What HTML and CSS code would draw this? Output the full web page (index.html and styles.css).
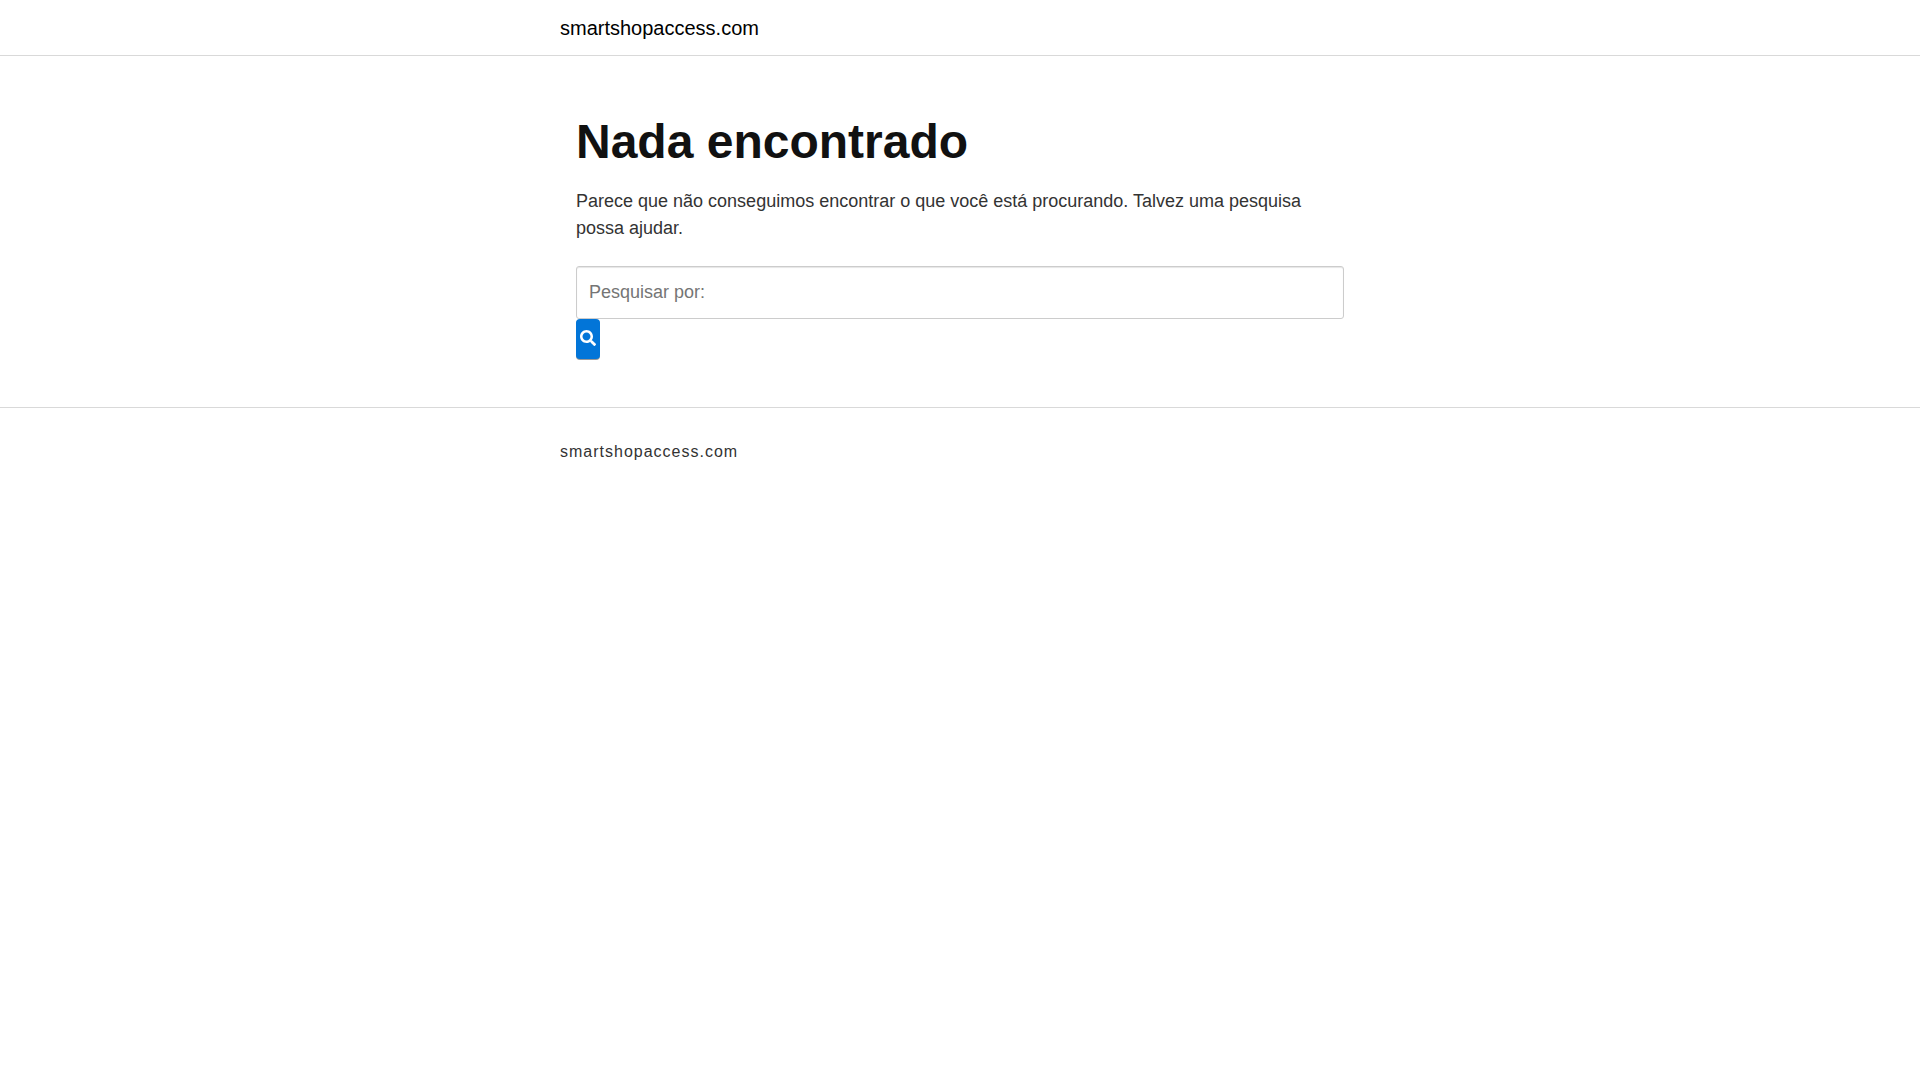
FILE: index.html
```html
<!DOCTYPE html>
<html lang="pt-BR">
<head>
    <meta charset="UTF-8">
    <meta name="viewport" content="width=device-width, initial-scale=1.0">
    <title>Nada encontrado - smartshopaccess.com</title>
    <link rel="stylesheet" href="styles.css">
</head>
<body>
    <header class="site-header">
        <div class="container">
            <a class="site-brand" href="#">smartshopaccess.com</a>
        </div>
    </header>

    <main class="content">
        <h1>Nada encontrado</h1>
        <p>Parece que não conseguimos encontrar o que você está procurando. Talvez uma pesquisa possa ajudar.</p>
        <form class="search-form" role="search">
            <input class="search-field" type="search" placeholder="Pesquisar por:" aria-label="Pesquisar por:">
            <button class="search-submit" type="submit" aria-label="Pesquisar">
                <svg viewBox="0 0 512 512" width="16" height="16" aria-hidden="true">
                    <path fill="currentColor" d="M505 442.700L405.300 343c-4.500-4.500-10.600-7-17-7H372c27.600-35.300 44-79.700 44-128C416 93.100 322.900 0 208 0S0 93.100 0 208s93.100 208 208 208c48.300 0 92.700-16.400 128-44v16.300c0 6.400 2.500 12.500 7 17l99.700 99.700c9.400 9.400 24.600 9.400 33.900 0l28.300-28.300c9.400-9.400 9.400-24.600.1-34zM208 336c-70.700 0-128-57.200-128-128 0-70.700 57.200-128 128-128 70.700 0 128 57.200 128 128 0 70.700-57.200 128-128 128z"/>
                </svg>
            </button>
        </form>
    </main>

    <footer class="site-footer">
        <div class="container">
            <p class="copyright">smartshopaccess.com</p>
        </div>
    </footer>
</body>
</html>
```
FILE: styles.css
```css
* {
    margin: 0;
    padding: 0;
    box-sizing: border-box;
}

body {
    background: #fff;
    color: #333;
    font-family: "Liberation Sans", Arial, sans-serif;
    font-size: 18px;
    line-height: 27px;
}

.container {
    max-width: 800px;
    margin: 0 auto;
}

/* Header */
.site-header {
    padding: 13px 0 12px;
    border-bottom: 1px solid #d9d9d9;
}

.site-brand {
    display: block;
    color: #000;
    font-size: 20px;
    line-height: 30px;
    text-decoration: none;
}

/* Content */
.content {
    max-width: 800px;
    margin: 0 auto;
    padding: 56px 16px 48px;
}

h1 {
    margin-bottom: 16px;
    color: #111;
    font-size: 48px;
    line-height: 60px;
}

.content p {
    margin-bottom: 24px;
}

/* Search */
.search-form {
    display: flex;
    flex-direction: column;
    align-items: flex-start;
}

.search-field {
    width: 100%;
    height: 53px;
    padding: 0 12px;
    border: 1px solid #ccc;
    border-radius: 3px;
    box-shadow: inset 0 1px 1px rgba(0, 0, 0, 0.1);
    color: #333;
    font: inherit;
    appearance: none;
}

.search-submit {
    display: flex;
    justify-content: center;
    width: 24px;
    height: 40px;
    padding-top: 11px;
    border: 0;
    border-radius: 4px;
    background: #0275d8;
    box-shadow: 0 1px 0 rgba(0, 0, 0, 0.4);
    color: #fff;
    cursor: pointer;
}

/* Footer */
.site-footer {
    padding: 32px 0;
    border-top: 1px solid #d9d9d9;
}

.copyright {
    font-size: 16px;
    line-height: 24px;
    letter-spacing: 1px;
}
```
